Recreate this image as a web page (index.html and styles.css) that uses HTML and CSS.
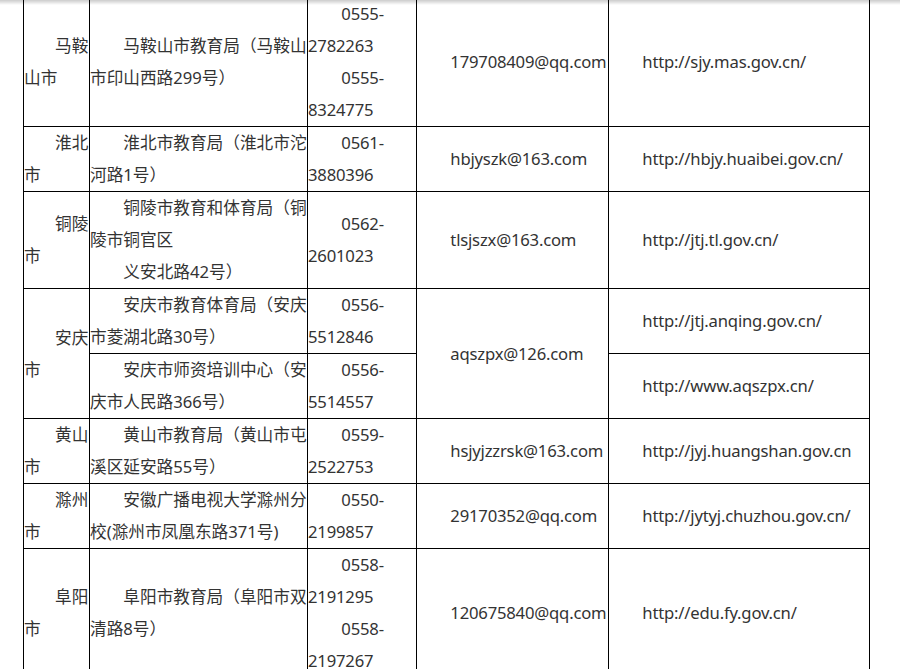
FILE: index.html
```html
<!DOCTYPE html>
<html lang="zh-CN">
<head>
  <meta charset="UTF-8" />
  <meta name="viewport" content="width=device-width, initial-scale=1.0" />
  <title>安徽省各市教育局联系方式</title>
  <link rel="stylesheet" href="styles.css">
</head>

<body>

  <!-- top bar shadow (page is scrolled) -->
  <div class="top-shadow"></div>

  <div class="content">
    <table class="contact-table">
      <colgroup>
        <col class="col-city">
        <col class="col-addr">
        <col class="col-tel">
        <col class="col-mail">
        <col class="col-site">
      </colgroup>
      <tbody>
        <tr>
          <td class="city"><p>马鞍山市</p></td>
          <td><p>马鞍山市教育局（马鞍山市印山西路299号）</p></td>
          <td class="latin"><p>0555-2782263</p><p>0555-8324775</p></td>
          <td class="latin"><p>179708409@qq.com</p></td>
          <td class="latin"><p>http://sjy.mas.gov.cn/</p></td>
        </tr>
        <tr>
          <td class="city"><p>淮北市</p></td>
          <td><p>淮北市教育局（淮北市沱河路1号）</p></td>
          <td class="latin"><p>0561-3880396</p></td>
          <td class="latin"><p>hbjyszk@163.com</p></td>
          <td class="latin"><p>http://hbjy.huaibei.gov.cn/</p></td>
        </tr>
        <tr>
          <td class="city"><p>铜陵市</p></td>
          <td><p>铜陵市教育和体育局（铜陵市铜官区</p><p>义安北路42号）</p></td>
          <td class="latin"><p>0562-2601023</p></td>
          <td class="latin"><p>tlsjszx@163.com</p></td>
          <td class="latin"><p>http://jtj.tl.gov.cn/</p></td>
        </tr>
        <tr>
          <td class="city" rowspan="2"><p>安庆市</p></td>
          <td><p>安庆市教育体育局（安庆市菱湖北路30号）</p></td>
          <td class="latin"><p>0556-5512846</p></td>
          <td class="latin" rowspan="2"><p>aqszpx@126.com</p></td>
          <td class="latin"><p>http://jtj.anqing.gov.cn/</p></td>
        </tr>
        <tr>
          <td><p>安庆市师资培训中心（安庆市人民路366号）</p></td>
          <td class="latin"><p>0556-5514557</p></td>
          <td class="latin"><p>http://www.aqszpx.cn/</p></td>
        </tr>
        <tr>
          <td class="city"><p>黄山市</p></td>
          <td><p>黄山市教育局（黄山市屯溪区延安路55号）</p></td>
          <td class="latin"><p>0559-2522753</p></td>
          <td class="latin"><p>hsjyjzzrsk@163.com</p></td>
          <td class="latin"><p>http://jyj.huangshan.gov.cn</p></td>
        </tr>
        <tr>
          <td class="city"><p>滁州市</p></td>
          <td><p>安徽广播电视大学滁州分校(滁州市凤凰东路371号)</p></td>
          <td class="latin"><p>0550-2199857</p></td>
          <td class="latin"><p>29170352@qq.com</p></td>
          <td class="latin"><p>http://jytyj.chuzhou.gov.cn/</p></td>
        </tr>
        <tr>
          <td class="city"><p>阜阳市</p></td>
          <td><p>阜阳市教育局（阜阳市双清路8号）</p></td>
          <td class="latin"><p>0558-2191295</p><p>0558-2197267</p></td>
          <td class="latin"><p>120675840@qq.com</p></td>
          <td class="latin"><p>http://edu.fy.gov.cn/</p></td>
        </tr>
      </tbody>
    </table>
  </div>

</body>
</html>
```

FILE: styles.css
```css
* { margin: 0; padding: 0; box-sizing: border-box; }
body {
  font-family: "Noto Sans", "Noto Sans CJK SC", sans-serif;
  background-color: #fff;
  color: #333;
}

.top-shadow {
  position: fixed;
  top: 0; left: 0;
  width: 100%;
  height: 5px;
  background: linear-gradient(to bottom, rgba(0, 0, 0, 0.2), rgba(0, 0, 0, 0));
  z-index: 10;
}

.content {
  padding-left: 23px;
  margin-top: -3px;
}

/* --- table --- */
.contact-table {
  border-collapse: collapse;
  table-layout: fixed;
  width: 847px;
  font-size: 16.67px;
  line-height: 32px;
}
.contact-table .col-city { width: 66px; }
.contact-table .col-addr { width: 218px; }
.contact-table .col-tel  { width: 109px; }
.contact-table .col-mail { width: 192px; }
.contact-table .col-site { width: 261px; }

.contact-table td {
  border: 1px solid #000;
  vertical-align: middle;
  padding: 0;
}
.contact-table p {
  text-indent: 2em;
}
.contact-table .city p {
  text-indent: 31px;
}
.contact-table .latin {
  letter-spacing: -0.2px;
}
```
